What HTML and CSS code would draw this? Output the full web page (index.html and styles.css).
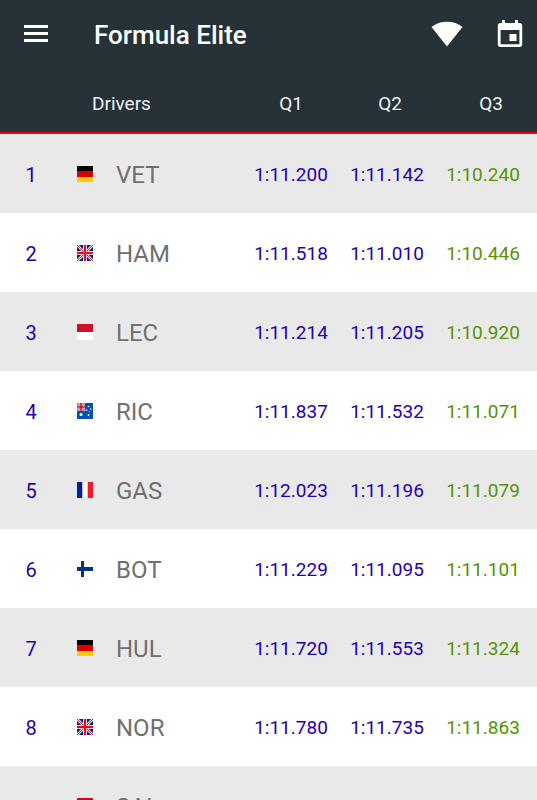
FILE: index.html
```html
<!DOCTYPE html>
<html lang="en">
<head>
<meta charset="utf-8">
<meta name="viewport" content="width=device-width, initial-scale=1">
<title>Formula Elite</title>
<link rel="stylesheet" href="styles.css">
</head>
<body>
<svg class="defs" aria-hidden="true">
  <symbol id="de" viewBox="0 0 16 16"><path fill="#000" d="M0 0h16v6H0z"/><path fill="#d00" d="M0 5h16v6H0z"/><path fill="#ffce00" d="M0 11h16v5H0z"/></symbol>
  <symbol id="gb" viewBox="0 0 16 16"><path fill="#012180" d="M0 0h16v16H0z"/><path stroke="#fff" stroke-width="2.600" d="M0 0l16 16M16 0L0 16"/><path stroke="#d8102e" stroke-width="1" d="M0 0l16 16M16 0L0 16"/><path stroke="#fff" stroke-width="4" d="M8 0v16M0 8h16"/><path stroke="#d8102e" stroke-width="2.400" d="M8 0v16M0 8h16"/></symbol>
  <symbol id="mc" viewBox="0 0 16 16"><path fill="#fff" d="M0 0h16v16H0z"/><path fill="#ce1126" d="M0 0h16v8H0z"/></symbol>
  <symbol id="au" viewBox="0 0 16 16"><path fill="#0052b4" d="M0 0h16v16H0z"/><path stroke="#fff" stroke-width="1.500" d="M0 0l8 8M8 0L0 8"/><path stroke="#fff" stroke-width="3" d="M4 0v8M0 4h8"/><path stroke="#d80027" stroke-width="1.600" d="M4 0v8M0 4h8"/><path stroke="#d80027" stroke-width=".6" d="M0 0l8 8M8 0L0 8"/><circle fill="#fff" cx="4" cy="11.500" r="1.500"/><g fill="#fff"><circle cx="11.500" cy="3.500" r=".8"/><circle cx="9.500" cy="7" r=".8"/><circle cx="13.700" cy="6" r=".8"/><circle cx="12.300" cy="8.500" r=".5"/><circle cx="11.500" cy="12" r=".9"/></g></symbol>
  <symbol id="fr" viewBox="0 0 16 16"><path fill="#fff" d="M0 0h16v16H0z"/><path fill="#00209f" d="M0 0h5.300v16H0z"/><path fill="#f31830" d="M10.700 0H16v16h-5.300z"/></symbol>
  <symbol id="fi" viewBox="0 0 16 16"><path fill="#fff" d="M0 0h16v16H0z"/><path fill="#003580" d="M4 0h3v16H4zM0 6h16v4H0z"/></symbol>
  <symbol id="es" viewBox="0 0 16 16"><path fill="#d80027" d="M0 0h16v16H0z"/><path fill="#ffda44" d="M0 4h16v8H0z"/></symbol>
</svg>
<header class="app-bar">
  <button class="icon-button" type="button" aria-label="Menu">
    <svg width="26" height="18" viewBox="0 0 26 18" fill="#fff"><path d="M1 0h24v3H1zM1 7h24v3H1zM1 14h24v3H1z"/></svg>
  </button>
  <h1 class="title">Formula Elite</h1>
  <button class="icon-button" type="button" aria-label="Connection">
    <svg width="32" height="26" viewBox="0 0 32 26" fill="#fff"><path d="M16 25.500L.5 6Q7 .8 16 .8T31.500 6z"/></svg>
  </button>
  <button class="icon-button" type="button" aria-label="Calendar">
    <svg width="26" height="28" viewBox="0 0 26 28"><path fill="#fff" fill-rule="evenodd" d="M5 0h3v3h10V0h3v3h1.500A2.700 2.700 0 0 1 25.200 5.700v18.600A2.700 2.700 0 0 1 22.500 27h-19A2.700 2.700 0 0 1 .8 24.300V5.700A2.700 2.700 0 0 1 3.500 3H5zM3.600 10v14.200h18.800V10zM12.500 14h7v7h-7z"/></svg>
  </button>
</header>
<main>
<table class="times">
  <colgroup><col class="col-rank"><col class="col-flag"><col><col class="col-time"><col class="col-time"><col class="col-last"></colgroup>
  <thead>
    <tr><th class="drivers" colspan="3" scope="col">Drivers</th><th scope="col">Q1</th><th class="q2" scope="col">Q2</th><th class="q3" scope="col">Q3</th></tr>
  </thead>
  <tbody>
    <tr><td class="rank">1</td><td><svg class="flag" role="img" aria-label="Germany"><use href="#de"/></svg></td><td class="name">VET</td><td>1:11.200</td><td>1:11.142</td><td class="best">1:10.240</td></tr>
    <tr><td class="rank">2</td><td><svg class="flag" role="img" aria-label="United Kingdom"><use href="#gb"/></svg></td><td class="name">HAM</td><td>1:11.518</td><td>1:11.010</td><td class="best">1:10.446</td></tr>
    <tr><td class="rank">3</td><td><svg class="flag" role="img" aria-label="Monaco"><use href="#mc"/></svg></td><td class="name">LEC</td><td>1:11.214</td><td>1:11.205</td><td class="best">1:10.920</td></tr>
    <tr><td class="rank">4</td><td><svg class="flag" role="img" aria-label="Australia"><use href="#au"/></svg></td><td class="name">RIC</td><td>1:11.837</td><td>1:11.532</td><td class="best">1:11.071</td></tr>
    <tr><td class="rank">5</td><td><svg class="flag" role="img" aria-label="France"><use href="#fr"/></svg></td><td class="name">GAS</td><td>1:12.023</td><td>1:11.196</td><td class="best">1:11.079</td></tr>
    <tr><td class="rank">6</td><td><svg class="flag" role="img" aria-label="Finland"><use href="#fi"/></svg></td><td class="name">BOT</td><td>1:11.229</td><td>1:11.095</td><td class="best">1:11.101</td></tr>
    <tr><td class="rank">7</td><td><svg class="flag" role="img" aria-label="Germany"><use href="#de"/></svg></td><td class="name">HUL</td><td>1:11.720</td><td>1:11.553</td><td class="best">1:11.324</td></tr>
    <tr><td class="rank">8</td><td><svg class="flag" role="img" aria-label="United Kingdom"><use href="#gb"/></svg></td><td class="name">NOR</td><td>1:11.780</td><td>1:11.735</td><td class="best">1:11.863</td></tr>
    <tr><td class="rank"></td><td><svg class="flag" role="img" aria-label="Spain"><use href="#es"/></svg></td><td class="name">SAI</td><td></td><td></td><td></td></tr>
  </tbody>
</table>
</main>
</body>
</html>
```

FILE: styles.css
```css
* {
  box-sizing: border-box;
}

body {
  margin: 0;
  height: 100vh;
  overflow: hidden;
  background: #fff;
  font-family: Roboto, "Liberation Sans", sans-serif;
}

.defs {
  display: none;
}

.app-bar {
  display: flex;
  align-items: center;
  height: 68px;
  padding: 0 14px 0 20px;
  background: #263238;
  color: #fff;
}

.icon-button {
  display: flex;
  padding: 0;
  border: 0;
  background: none;
  cursor: pointer;
}

.icon-button:first-child {
  padding: 0 3px;
}

.icon-button + .icon-button {
  margin-left: 34px;
}

.title {
  flex: 1;
  margin: 0 0 0 42px;
  padding-top: 2px;
  font-size: 26px;
  font-weight: 500;
  line-height: 32px;
}

.times {
  width: 100%;
  table-layout: fixed;
  border-collapse: separate;
  border-spacing: 0;
  color: #1f00b4;
  font-size: 19px;
  line-height: 24px;
}

.col-rank {
  width: 62px;
}

.col-flag {
  width: 46px;
}

.col-time {
  width: 96px;
}

.col-last {
  width: 102px;
}

th {
  height: 66px;
  padding: 8px 0 0;
  border-bottom: 2px solid #d50f14;
  background: #263238;
  color: #eceff1;
  font-size: 19px;
  font-weight: 400;
}

.drivers {
  padding-left: 92px;
  text-align: left;
}

.q2 {
  padding-left: 6px;
}

.q3 {
  padding-left: 10px;
}

td {
  height: 79px;
  padding: 3px 0 0;
  text-align: center;
}

td:last-child {
  padding-right: 6px;
}

tbody tr:nth-child(odd) {
  background: #e9e9e9;
}

td.name {
  padding-left: 8px;
  color: #707070;
  font-size: 24px;
  text-align: left;
}

.rank {
  font-size: 20px;
}

.best {
  color: #559500;
}

.flag {
  display: block;
  width: 16px;
  height: 16px;
  margin: 0 auto 2px;
}
```
